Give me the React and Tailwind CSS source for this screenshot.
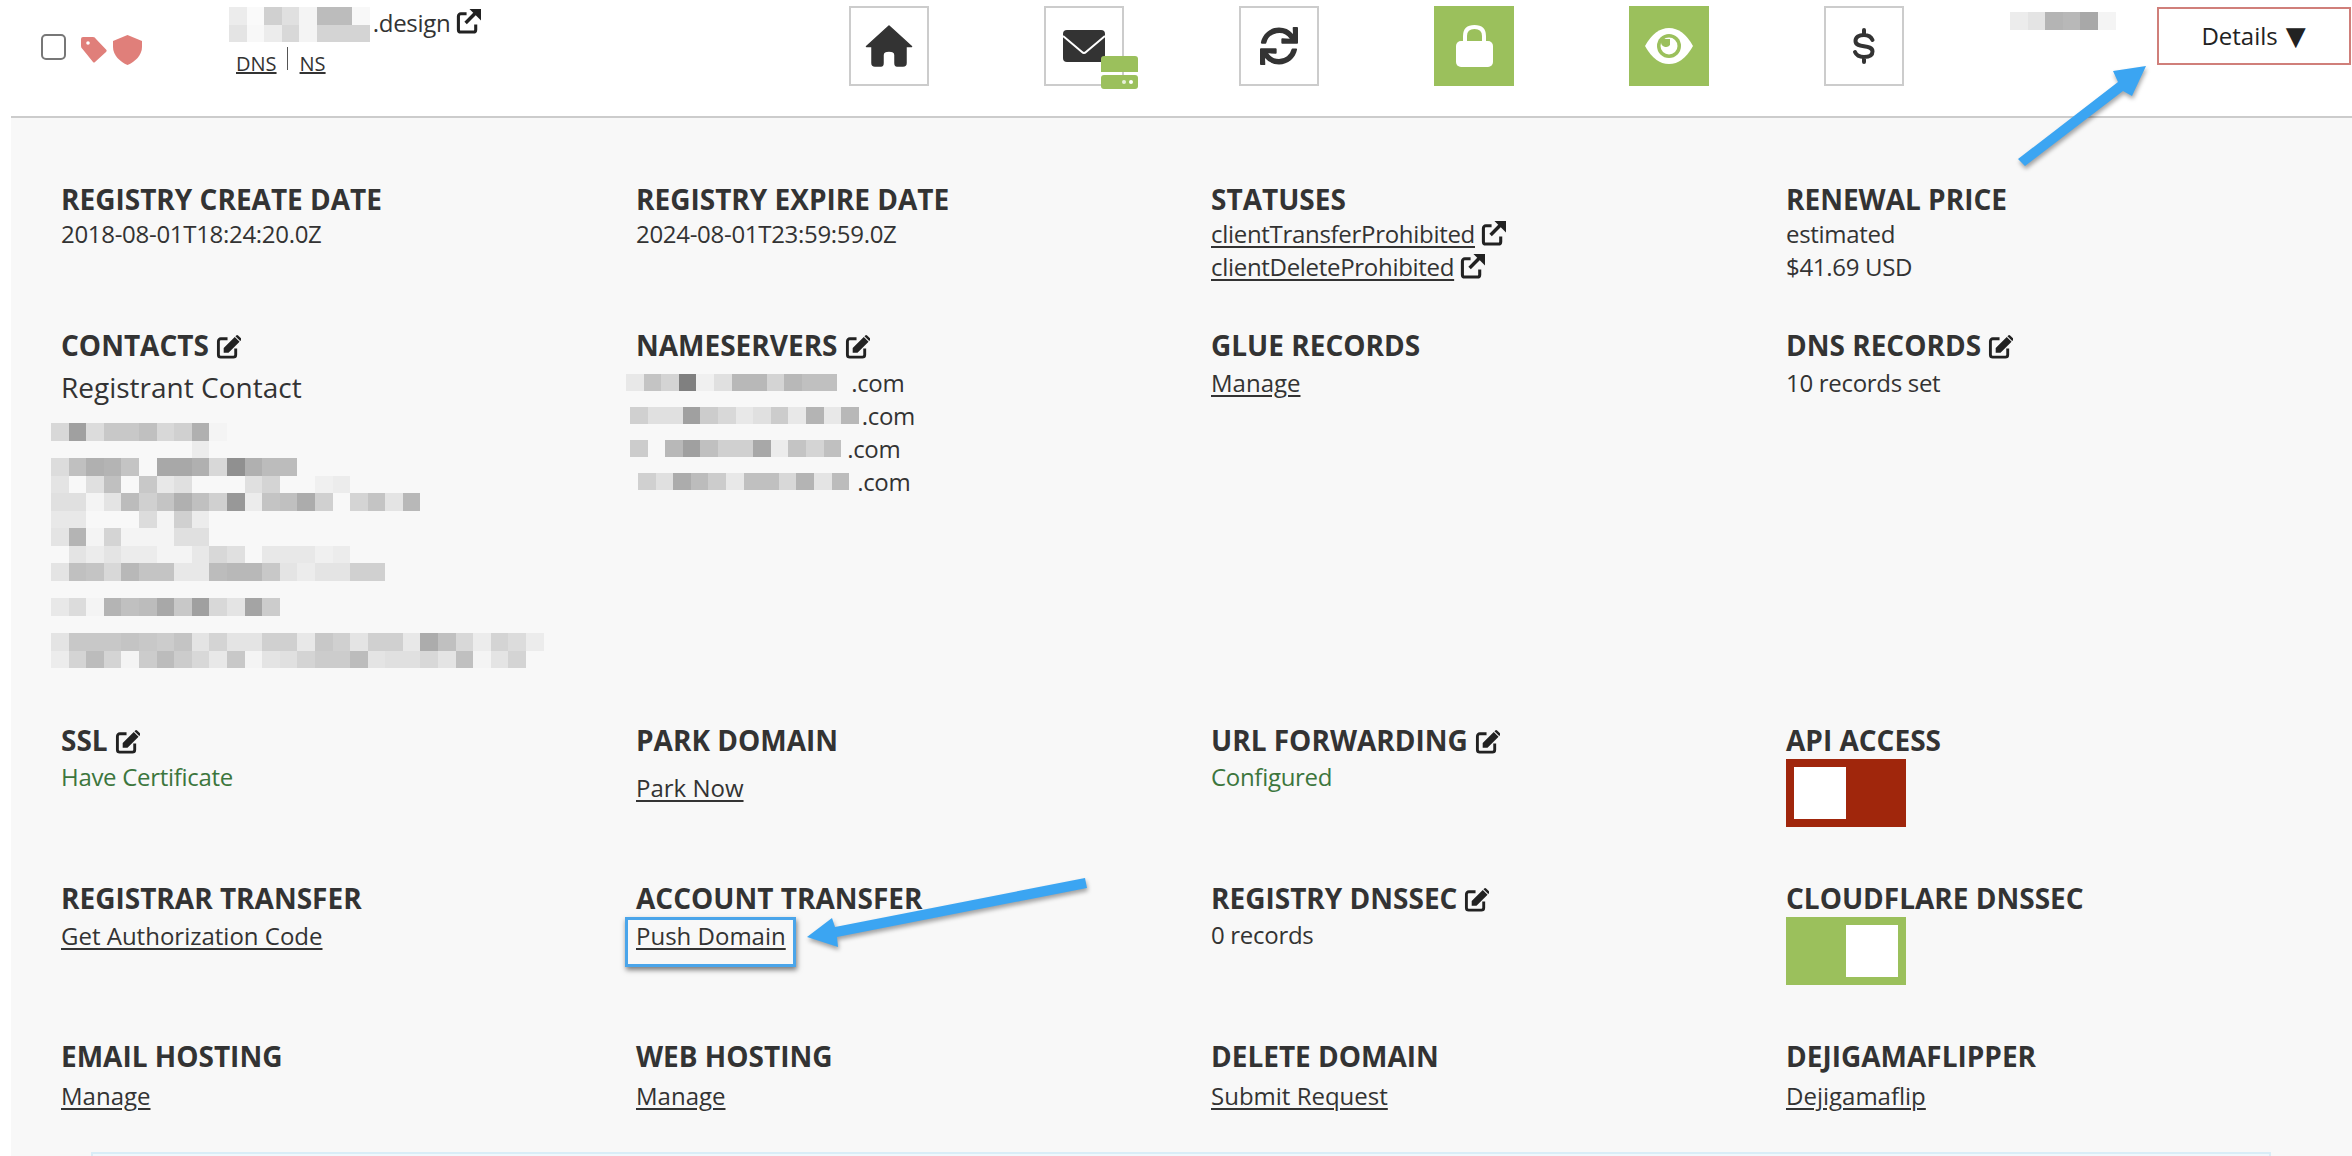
import React from 'react';
import { FaSync } from 'react-icons/fa';

// pixelated (redacted) areas of the screenshot, one string of greys per row
const contactRows = [
  'd8 a0 dc c8 c8 c0 d8 d0 b0 f4',
  'f8 f8 f8 f8 f8 f8 f8 f8 ec',
  'dc c0 b0 b4 c4 f8 a8 a8 b0 d8 90 b0 bc bc',
  'e4 f8 e0 c0 f8 c8 e8 e0 f8 f8 f8 e0 d4 f8 f8 f0 ec',
  'e0 e0 f4 e4 bc d0 c4 b0 c0 d0 98 ec c4 c0 ac d0 f8 d4 c4 e4 b8',
  'e8 e8 f8 f8 f8 dc f4 d0 ec',
  'e4 b4 f4 d4 f4 f4 f4 e0 e0',
  'f8 e4 ec e4 ec ec f4 f4 e8 d8 e0 f8 e8 e8 e8 f0 ec',
  'e4 c0 c4 d8 b8 c4 c4 e8 e8 bc b8 b8 c8 e4 ec e4 e4 d0 d0',
  '',
  'e8 dc f4 b4 c0 bc a8 c8 a0 d8 e4 a4 cc',
  '',
  'e4 c8 c8 c8 c4 c8 cc c4 e4 d4 e4 e4 d0 d0 e8 c8 d0 e4 d0 d0 e8 ac c0 d8 ec d4 dc ec',
  'ec d4 bc d4 f4 cc bc cc d8 e8 c8 f4 e4 e0 d4 cc cc bc e4 e0 e0 d8 e4 c0 f4 e4 d4',
];

const domainRows = ['ec fa d0 e0 f4 bc bc f8', 'e4 f8 ec d8 f4 d4 d4 d4'];
const ownerRows = ['ec e4 b4 b8 a8 f4'];

const nameservers = [
  { rows: ['e8 c4 d4 80 f0 e0 b8 b8 d4 b8 c0 c0'], offset: '-ml-[10px]', gap: 'ml-[14px]' },
  { rows: ['d0 e0 e0 a0 cc d8 e8 e0 cc e8 b4 e8 b8'], offset: '-ml-[6px]', gap: 'ml-[3px]' },
  { rows: ['cc f8 b8 a0 c0 d0 d0 a8 ec c4 d4 c0'], offset: '-ml-[6px]', gap: 'ml-[6px]' },
  { rows: ['d0 e0 ac bc cc e8 c0 c0 d8 b4 e4 bc'], offset: 'ml-[2px]', gap: 'ml-[8px]' },
];

function Mosaic({ rows }) {
  return (
    <div className="flex flex-col shrink-0">
      {rows.map((row, i) => (
        <div key={i} className="flex h-[17.5px]">
          {row.split(' ').filter(Boolean).map((c, j) => (
            <div key={j} className="w-[17.6px] h-full" style={{ backgroundColor: `#${c}${c}${c}` }} />
          ))}
        </div>
      ))}
    </div>
  );
}

function ExternalIcon({ className }) {
  return (
    <svg viewBox="0 0 26 26" className={className}>
      <path d="M11 5H5a2.500 2.500 0 0 0-2.500 2.500v14A2.500 2.500 0 0 0 5 24h13a2.500 2.500 0 0 0 2.500-2.500V16" fill="none" stroke="#222" strokeWidth="3.200" />
      <path d="M10 14.500 20 4.500" fill="none" stroke="#222" strokeWidth="3.600" />
      <path d="M14 0h12v12z" fill="#222" />
    </svg>
  );
}

function EditIcon() {
  return (
    <svg viewBox="0 0 26 26" className="w-[25px] h-[25px] ml-[7px] mt-[3px] shrink-0">
      <path d="M12 5H5a2.500 2.500 0 0 0-2.500 2.500v14A2.500 2.500 0 0 0 5 24h13a2.500 2.500 0 0 0 2.500-2.500V15" fill="none" stroke="#222" strokeWidth="3" />
      <path d="M8 14.500 19.500 3 24.500 8 13 19.500H8ZM21 1.500Q22 .5 23 1.500L26 4.500Q27 5.500 26 6.500L25.200 7.300 20.200 2.300Z" fill="#222" />
    </svg>
  );
}

function Title({ children, edit }) {
  return (
    <h3 className="flex items-center h-[36px] text-[28px] font-bold text-[#333] whitespace-nowrap">
      {children}
      {edit && <EditIcon />}
    </h3>
  );
}

function Body({ children, className = 'text-[#333]' }) {
  return <div className={`text-[24px] leading-[33px] tracking-[-0.3px] whitespace-nowrap ${className}`}>{children}</div>;
}

function TextLink({ children, className = '' }) {
  return (
    <Body className={`text-[#333] tracking-normal ${className}`}>
      <a className="underline underline-offset-[3px] decoration-2">{children}</a>
    </Body>
  );
}

function Toggle({ on }) {
  return (
    <div className={`flex w-[120px] h-[68px] mt-[1px] p-2 ${on ? 'bg-[#9bc05c] justify-end' : 'bg-[#a0260c]'}`}>
      <div className="w-[52px] h-[52px] bg-white" />
    </div>
  );
}

function ActionButton({ green, children }) {
  return (
    <div className={`relative flex items-center justify-center w-[80px] h-[80px] ${green ? 'bg-[#9bc05c]' : 'bg-white border-2 border-[#ccc]'}`}>
      {children}
    </div>
  );
}

function Header() {
  return (
    <header className="ml-[11px] h-[118px] shrink-0 border-b-2 border-[#ccc] bg-white flex items-start">
      <div className="w-[218px] shrink-0 flex items-start pl-[30px] pt-[34px]">
        <div className="w-[25px] h-[26px] rounded-[5px] border-2 border-[#777] bg-white" />
        <svg viewBox="0 0 26 26" className="w-[26px] h-[26px] ml-[15px] mt-[3px]">
          <path d="M2 0H12Q14 0 15 2L25.500 13Q26 14 25 15L14 25Q13 26 12 25L1.500 12Q0 11 0 9V2Q0 0 2 0Z" fill="#e07f7a" />
          <circle cx="7" cy="6" r="1.800" fill="#fff" />
        </svg>
        <svg viewBox="0 0 29 30" className="w-[29px] h-[30px] ml-[6px] mt-[1px]">
          <path d="M14.500 0L29 6V12C29 20 22 27 14.500 30C7 27 0 20 0 12V6Z" fill="#e07f7a" />
        </svg>
      </div>
      <div className="w-[620px] shrink-0 pt-[7px]">
        <div className="flex items-start h-[35px]">
          <Mosaic rows={domainRows} />
          <span className="ml-[3px] -mt-[1px] text-[24px] leading-[33px] tracking-[-0.3px] text-[#333]">.design</span>
          <ExternalIcon className="w-[25px] h-[25px] ml-[6px] mt-[2px]" />
        </div>
        <div className="flex items-start ml-[7px] mt-[5px] text-[20px] leading-[24px] text-[#333]">
          <a className="underline mt-[5px]">DNS</a>
          <div className="w-[1px] h-[23px] bg-[#555] ml-[10px] mr-[12px]" />
          <a className="underline mt-[5px]">NS</a>
        </div>
      </div>
      <div className="flex gap-[115px] shrink-0 pt-[6px]">
        <ActionButton>
          <svg viewBox="0 0 48 42" className="w-[48px] h-[42px]">
            <path d="M24 1 46.500 21.500H41V38Q41 41 38 41H32Q30 41 30 38V30Q30 26 24 26Q18 26 18 30V38Q18 41 16 41H10Q7 41 7 38V21.500H1.500Z" fill="#333" stroke="#333" strokeWidth="1.500" strokeLinejoin="round" />
          </svg>
        </ActionButton>
        <ActionButton>
          <svg viewBox="0 0 42 32" className="w-[42px] h-[32px]">
            <rect width="42" height="32" rx="4" fill="#333" />
            <path d="M0 6 19 22Q21 24 23 22L42 6" fill="none" stroke="#fff" strokeWidth="2" />
          </svg>
          <svg viewBox="0 0 37 33" className="absolute left-[55px] top-[48px] w-[37px] h-[33px]">
            <path d="M3 0H34Q37 0 37 3V16H0V3Q0 0 3 0Z" fill="#9bc05c" />
            <rect x="0" y="19" width="37" height="14" rx="3" fill="#9bc05c" />
            <circle cx="23" cy="26" r="2" fill="#e8f0d8" />
            <circle cx="30" cy="26" r="2" fill="#fff" />
          </svg>
        </ActionButton>
        <ActionButton>
          <FaSync className="text-[38px] text-[#333]" />
        </ActionButton>
        <ActionButton green>
          <svg viewBox="0 0 37 42" className="w-[37px] h-[42px]">
            <path d="M9 18V11Q9 2 18.500 2Q28 2 28 11V18" fill="none" stroke="#fff" strokeWidth="4" />
            <rect y="16" width="37" height="26" rx="5" fill="#fff" />
          </svg>
        </ActionButton>
        <ActionButton green>
          <svg viewBox="0 0 48 36" className="w-[48px] h-[36px]">
            <path d="M0 18Q10 0 24 0Q38 0 48 18Q38 36 24 36Q10 36 0 18Z" fill="#fff" />
            <circle cx="24" cy="18" r="12" fill="#9bc05c" />
            <circle cx="24" cy="18" r="8.500" fill="#fff" />
            <path d="M16 11h9v6a5 5 0 0 1-9-3z" fill="#9bc05c" />
          </svg>
        </ActionButton>
        <ActionButton>
          <svg viewBox="0 0 24 36" className="w-[24px] h-[36px]">
            <path d="M12 2V7M12 29V34M20.500 12C19 8.500 16 7 12 7C7 7 3.500 9 3.500 13C3.500 21 20.500 15.500 20.500 23.500C20.500 27.500 17 29 12 29C8 29 4.500 27.500 3 24" fill="none" stroke="#333" strokeWidth="4" strokeLinecap="round" />
          </svg>
        </ActionButton>
      </div>
      <div className="ml-[106px] mt-[12px] shrink-0">
        <Mosaic rows={ownerRows} />
      </div>
      <div className="ml-[41px] mt-[7px] w-[194px] h-[58px] shrink-0 border-2 border-[#d07f7a] flex items-center justify-center text-[24px] text-[#222]">
        Details <span className="ml-[8px] font-['DejaVu_Sans'] text-[26px] leading-none">▼</span>
      </div>
    </header>
  );
}

function Details() {
  return (
    <section className="ml-[11px] flex-1 min-h-0 bg-[#f8f8f8] pl-[50px] pt-[63px]">
      <div className="grid grid-cols-[repeat(4,575px)] grid-rows-[146px_395px_158px_158px_115px]">
        <div>
          <Title>REGISTRY CREATE DATE</Title>
          <Body>2018-08-01T18:24:20.0Z</Body>
        </div>
        <div>
          <Title>REGISTRY EXPIRE DATE</Title>
          <Body>2024-08-01T23:59:59.0Z</Body>
        </div>
        <div>
          <Title>STATUSES</Title>
          <Body className="flex items-center text-[#333]">
            <a className="underline underline-offset-[3px] decoration-2">clientTransferProhibited</a>
            <ExternalIcon className="w-[25px] h-[25px] ml-[6px]" />
          </Body>
          <Body className="flex items-center text-[#333]">
            <a className="underline underline-offset-[3px] decoration-2">clientDeleteProhibited</a>
            <ExternalIcon className="w-[25px] h-[25px] ml-[6px]" />
          </Body>
        </div>
        <div>
          <Title>RENEWAL PRICE</Title>
          <Body>estimated</Body>
          <Body>$41.69 USD</Body>
        </div>

        <div>
          <Title edit>CONTACTS</Title>
          <div className="text-[28px] leading-[36px] text-[#333] mt-[6px]">Registrant Contact</div>
          <div className="-ml-[10px] mt-[18px]">
            <Mosaic rows={contactRows} />
          </div>
        </div>
        <div>
          <Title edit>NAMESERVERS</Title>
          <div className="pt-[3px]">
            {nameservers.map((ns, i) => (
              <Body key={i} className={`flex items-center text-[#333] ${ns.offset}`}>
                <Mosaic rows={ns.rows} />
                <span className={ns.gap}>.com</span>
              </Body>
            ))}
          </div>
        </div>
        <div>
          <Title>GLUE RECORDS</Title>
          <TextLink className="mt-[3px]">Manage</TextLink>
        </div>
        <div>
          <Title edit>DNS RECORDS</Title>
          <Body className="mt-[3px] text-[#333]">10 records set</Body>
        </div>

        <div>
          <Title edit>SSL</Title>
          <Body className="mt-[2px] text-[#3c763d]">Have Certificate</Body>
        </div>
        <div>
          <Title>PARK DOMAIN</Title>
          <TextLink className="mt-[13px]">Park Now</TextLink>
        </div>
        <div>
          <Title edit>URL FORWARDING</Title>
          <Body className="mt-[2px] text-[#3c763d]">Configured</Body>
        </div>
        <div>
          <Title>API ACCESS</Title>
          <Toggle />
        </div>

        <div>
          <Title>REGISTRAR TRANSFER</Title>
          <TextLink className="mt-[3px]">Get Authorization Code</TextLink>
        </div>
        <div>
          <Title>ACCOUNT TRANSFER</Title>
          <div className="relative">
            <TextLink className="mt-[3px]">Push Domain</TextLink>
            <div className="absolute -left-[11px] -top-[2px] w-[171px] h-[50px] border-[3px] border-[#4aa5ea] shadow-[1px_3px_5px_rgba(0,0,0,0.5)]" />
          </div>
        </div>
        <div>
          <Title edit>REGISTRY DNSSEC</Title>
          <Body className="mt-[2px] text-[#333]">0 records</Body>
        </div>
        <div>
          <Title>CLOUDFLARE DNSSEC</Title>
          <Toggle on />
        </div>

        <div>
          <Title>EMAIL HOSTING</Title>
          <TextLink className="mt-[5px]">Manage</TextLink>
        </div>
        <div>
          <Title>WEB HOSTING</Title>
          <TextLink className="mt-[5px]">Manage</TextLink>
        </div>
        <div>
          <Title>DELETE DOMAIN</Title>
          <TextLink className="mt-[5px]">Submit Request</TextLink>
        </div>
        <div>
          <Title>DEJIGAMAFLIPPER</Title>
          <TextLink className="mt-[5px]">Dejigamaflip</TextLink>
        </div>
      </div>
      <div className="-mt-[1px] ml-[30px] w-[2180px] h-[20px] border-2 border-[#d9edf7] bg-[#f0f8fc]" />
    </section>
  );
}

export default function App() {
  return (
    <div className="relative w-[2352px] h-[1156px] overflow-hidden bg-white flex flex-col font-['Open_Sans',sans-serif]">
      <Header />
      <Details />
      {/* the two annotation arrows drawn on top of the screenshot */}
      <svg className="absolute inset-0 w-[2352px] h-[1156px] pointer-events-none drop-shadow-[1px_3px_2px_rgba(0,0,0,0.35)]" viewBox="0 0 2352 1156">
        <polygon points="2018,159 2025,166 2123,91 2132,96 2146,66 2113,71 2118,82" fill="#3ba5f2" />
        <polygon points="1085,878 1087,888 837,937 838,947 807,937 832,918 835,927" fill="#3ba5f2" />
      </svg>
    </div>
  );
}
